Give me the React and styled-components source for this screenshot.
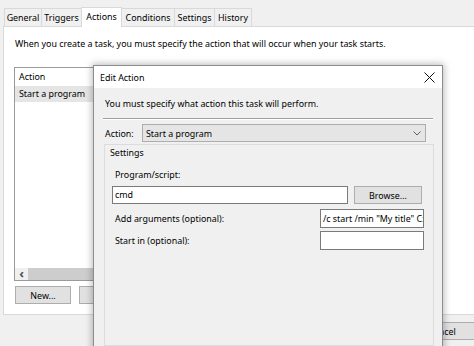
import styled, { createGlobalStyle } from "styled-components";

const GlobalStyle = createGlobalStyle`
  body {
    margin: 0;
    background: #f0f0f0;
    font-family: "Noto Sans", "DejaVu Sans", sans-serif;
    font-size: 8.9px;
    color: #000000;
  }
`;

const tabs = [
  { name: "General", width: 38 },
  { name: "Triggers", width: 41 },
  { name: "Actions", width: 41, active: true },
  { name: "Conditions", width: 54 },
  { name: "Settings", width: 41 },
  { name: "History", width: 38 },
];

function CloseIcon() {
  return (
    <svg width="11" height="11" viewBox="0 0 11 11">
      <path d="M0.5 0.5 L10.5 10.5 M10.5 0.5 L0.5 10.5" stroke="#111" strokeWidth="1" fill="none" />
    </svg>
  );
}

function Chevron() {
  return (
    <svg width="8" height="5" viewBox="0 0 8 5">
      <path d="M0.5 0.5 L4 4 L7.5 0.5" stroke="#606060" strokeWidth="1" fill="none" />
    </svg>
  );
}

function App() {
  return (
    <>
      <GlobalStyle />
      <Window>
        <TabStrip>
          {tabs.map((t) => (
            <Tab key={t.name} $width={t.width} $active={t.active}>
              {t.name}
            </Tab>
          ))}
        </TabStrip>
        <Panel>
          <Description>
            When you create a task, you must specify the action that will occur when your task starts.
          </Description>
          <ListBox>
            <ListHeader>Action</ListHeader>
            <ListRow $selected>Start a program</ListRow>
            <ListFill />
            <HScroll>
              <ScrollArrow>‹</ScrollArrow>
              <ScrollThumb />
            </HScroll>
          </ListBox>
          <ButtonRow>
            <Button $width={56}>New...</Button>
            <Button $width={56}>Edit...</Button>
          </ButtonRow>
        </Panel>
        <Footer>
          <Button $width={84}>Cancel</Button>
        </Footer>

        <Dialog>
          <TitleBar>
            <span>Edit Action</span>
            <CloseIcon />
          </TitleBar>
          <DialogBody>
            <Message>You must specify what action this task will perform.</Message>
            <Separator />
            <ActionRow>
              <ActionLabel>Action:</ActionLabel>
              <ComboBox>
                <span>Start a program</span>
                <Chevron />
              </ComboBox>
            </ActionRow>
            <GroupBox>
              <GroupTitle>Settings</GroupTitle>
              <FieldLabel>Program/script:</FieldLabel>
              <ProgramRow>
                <TextBox $width={236}>cmd</TextBox>
                <Button $width={68}>Browse...</Button>
              </ProgramRow>
              <OptionRow $gap={5}>
                <FieldLabel as="span">Add arguments (optional):</FieldLabel>
                <TextBox $width={104} $height={19}>/c start /min "My title" C:\Windows\System32</TextBox>
              </OptionRow>
              <OptionRow $gap={3}>
                <FieldLabel as="span">Start in (optional):</FieldLabel>
                <TextBox $width={104} $height={19} />
              </OptionRow>
            </GroupBox>
          </DialogBody>
        </Dialog>
      </Window>
    </>
  );
}

export default App;

const Window = styled.div`
  position: relative;
  width: 474px;
  height: 346px;
  overflow: hidden;
  background: #f0f0f0;
`;

const TabStrip = styled.div`
  display: flex;
  align-items: flex-end;
  height: 27px;
  padding-left: 4px;
  position: relative;
  z-index: 1;
`;

const Tab = styled.div`
  box-sizing: border-box;
  width: ${(p) => p.$width}px;
  height: ${(p) => (p.$active ? 20 : 18)}px;
  margin-bottom: ${(p) => (p.$active ? 0 : 1)}px;
  border: 1px solid #d9d9d9;
  border-bottom: none;
  margin-right: -1px;
  background: ${(p) => (p.$active ? "#ffffff" : "#f0f0f0")};
  display: flex;
  align-items: center;
  justify-content: center;
  line-height: 15px;
  padding-bottom: ${(p) => (p.$active ? 2 : 0)}px;
  white-space: nowrap;
`;

const Panel = styled.div`
  box-sizing: border-box;
  margin-left: 3px;
  margin-top: -1px;
  width: 500px;
  height: 289px;
  background: #ffffff;
  border: 1px solid #d9d9d9;
  padding: 9px 0 0 10px;
`;

const Description = styled.div`
  line-height: 15px;
  padding-left: 1px;
  white-space: nowrap;
`;

const ListBox = styled.div`
  box-sizing: border-box;
  margin-top: 16px;
  width: 260px;
  height: 214px;
  border: 1px solid #9a9a9a;
  display: flex;
  flex-direction: column;
`;

const ListHeader = styled.div`
  height: 18px;
  line-height: 18px;
  padding-left: 4px;
`;

const ListRow = styled.div`
  height: 16px;
  line-height: 16px;
  padding-left: 4px;
  background: ${(p) => (p.$selected ? "#e5e5e5" : "transparent")};
`;

const ListFill = styled.div`
  flex: 1;
`;

const HScroll = styled.div`
  height: 12px;
  display: flex;
  background: #f0f0f0;
`;

const ScrollArrow = styled.div`
  width: 13px;
  font-size: 13px;
  line-height: 11px;
  text-align: center;
  color: #505050;
  font-weight: bold;
`;

const ScrollThumb = styled.div`
  flex: 1;
  background: #cdcdcd;
`;

const ButtonRow = styled.div`
  display: flex;
  gap: 8px;
  margin-top: 5px;
  padding-left: 1px;
`;

const Button = styled.div`
  box-sizing: border-box;
  width: ${(p) => p.$width}px;
  height: 18px;
  border: 1px solid #adadad;
  background: #e1e1e1;
  display: flex;
  align-items: center;
  justify-content: center;
  line-height: 15px;
  flex-shrink: 0;
`;

const Footer = styled.div`
  display: flex;
  justify-content: flex-end;
  padding-top: 7px;

  ${Button} {
    margin-right: -10px;
  }
`;

const Dialog = styled.div`
  position: absolute;
  left: 93px;
  top: 65px;
  width: 350px;
  height: 320px;
  box-sizing: border-box;
  border: 1px solid #8c8c8c;
  background: #f0f0f0;
  box-shadow: 0 0 7px 1px rgba(0, 0, 0, 0.28);
  z-index: 2;
`;

const TitleBar = styled.div`
  height: 22px;
  background: #ffffff;
  display: flex;
  align-items: center;
  justify-content: space-between;
  padding: 0 7px 0 6px;
  line-height: 15px;
`;

const DialogBody = styled.div`
  padding: 8px 9px 0 9px;
`;

const Message = styled.div`
  line-height: 16px;
  padding-left: 2px;
  white-space: nowrap;
`;

const Separator = styled.div`
  margin-top: 6px;
  height: 1px;
  background: #a0a0a0;
  border-bottom: 1px solid #ffffff;
`;

const ActionRow = styled.div`
  display: flex;
  align-items: center;
  margin-top: 4px;
  padding: 0 7px 0 2px;
`;

const ActionLabel = styled.span`
  width: 37px;
  line-height: 15px;
`;

const ComboBox = styled.div`
  flex: 1;
  box-sizing: border-box;
  height: 18px;
  border: 1px solid #adadad;
  background: #e5e5e5;
  display: flex;
  align-items: center;
  justify-content: space-between;
  padding: 0 4px 0 3px;
  line-height: 15px;
`;

const GroupBox = styled.div`
  margin: 2px -1px 0 1px;
  border: 1px solid #dcdcdc;
  padding: 0 9px 0 7px;
  height: 200px;
`;

const GroupTitle = styled.div`
  line-height: 15px;
  margin-left: -2px;
`;

const FieldLabel = styled.div`
  line-height: 15px;
  padding-left: 3px;
  margin-top: 7px;
  white-space: nowrap;
`;

const ProgramRow = styled.div`
  display: flex;
  gap: 6px;
  margin-top: 4px;
`;

const TextBox = styled.div`
  box-sizing: border-box;
  width: ${(p) => p.$width}px;
  height: ${(p) => p.$height || 18}px;
  border: 1px solid #7a7a7a;
  background: #ffffff;
  padding-left: 2px;
  line-height: ${(p) => (p.$height || 18) - 2}px;
  white-space: nowrap;
  overflow: hidden;
  flex-shrink: 0;
`;

const OptionRow = styled.div`
  display: flex;
  align-items: center;
  justify-content: space-between;
  margin-top: ${(p) => p.$gap}px;

  ${FieldLabel} {
    margin-top: 0;
  }
`;
